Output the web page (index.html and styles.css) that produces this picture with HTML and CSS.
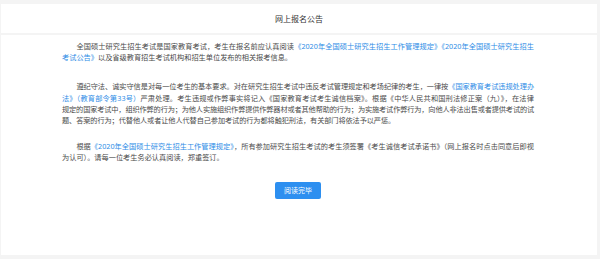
FILE: index.html
```html
<!DOCTYPE html>
<html lang="zh-CN">
<head>
    <meta charset="UTF-8">
    <title>网上报名公告</title>
    <link rel="stylesheet" href="styles.css">
</head>
<body>
<div class="page">
    <div class="panel-head">网上报名公告</div>

    <div class="panel-body">
        <div class="notice">
            <p>全国硕士研究生招生考试是国家教育考试，考生在报名前应认真阅读<a href="#">《2020年全国硕士研究生招生工作管理规定》</a><a href="#">《2020年全国硕士研究生招生考试公告》</a>以及省级教育招生考试机构和招生单位发布的相关报考信息。</p>

            <p class="tight">遵纪守法、诚实守信是对每一位考生的基本要求。对在研究生招生考试中违反考试管理规定和考场纪律的考生，一律按<a href="#">《国家教育考试违规处理办<span class="loose">法》（教育部令第33号）</span></a><span class="loose">严肃处理。考生违规或作弊事实将记入《国家教育考试考生诚信档案》。根据《中华人民共和国刑法修正案（九）》，在法律</span><span class="tighter">规定的国家考试中，组织作弊的行为；为他人实施组织作弊提供作弊器材或者其他帮助的行为；为实施考试作弊行为，向他人非法出售或者提供考试的试</span>题、答案的行为；代替他人或者让他人代替自己参加考试的行为都将触犯刑法，有关部门将依法予以严惩。</p>

            <p>根据<a href="#">《2020年全国硕士研究生招生工作管理规定》</a>，所有参加研究生招生考试的考生须签署《考生诚信考试承诺书》（网上报名时点击同意后即视为认可）。请每一位考生务必认真阅读，郑重签订。</p>
        </div>

        <div class="actions">
            <button id="readDone">阅读完毕</button>
        </div>
    </div>
</div>
</body>
</html>
```

FILE: styles.css
```css
        html, body {
            margin: 0;
            height: 100%;
        }

        body {
            font-family: "Noto Sans", "Noto Sans CJK SC", sans-serif;
            background-color: #f4f4f4;
            color: #4a4a4a;
        }

        .page {
            padding: 4px 3px 4px 1px;
            height: 100%;
            box-sizing: border-box;
            display: flex;
            flex-direction: column;
            gap: 2px;
        }

        .panel-head {
            background-color: #fff;
            height: 29px;
            display: flex;
            align-items: center;
            justify-content: center;
            font-size: 8px;
            color: #333;
        }

        .panel-body {
            flex: 1;
            background-color: #fff;
            padding: 6px 63px 0 61px;
        }

        .notice p {
            margin: 0 0 18px;
            font-size: 7.2px;
            line-height: 11.2px;
            text-indent: 2em;
            text-align: justify;
        }

        .notice p.tight {
            margin-bottom: 15px;
            letter-spacing: -0.1px;
        }

        .notice .loose {
            letter-spacing: 0.15px;
        }

        .notice .tighter {
            letter-spacing: -0.21px;
        }

        .notice a {
            color: #2d8ce6;
            text-decoration: none;
        }

        .actions {
            display: flex;
            justify-content: center;
            margin-top: 17px;
        }

        button {
            font-family: inherit;
            font-size: 7px;
            width: 46px;
            height: 17px;
            border: none;
            border-radius: 2px;
            background-color: #2d8ff0;
            color: white;
            cursor: pointer;
        }
```
